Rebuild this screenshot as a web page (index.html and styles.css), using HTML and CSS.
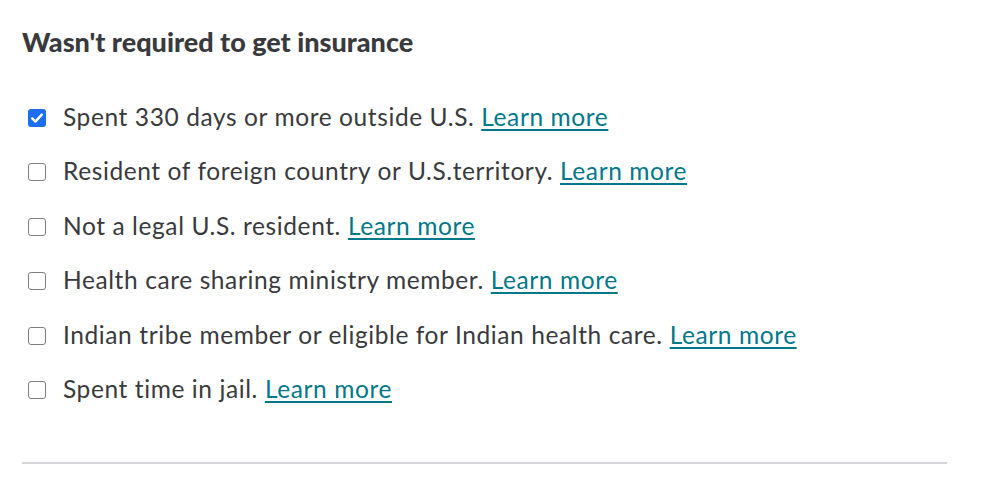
FILE: index.html
```html
<!DOCTYPE html>
<html lang="en">
  <head>
    <meta charset="UTF-8" />
    <meta name="viewport" content="width=device-width, initial-scale=1.0" />
    <title>Exemptions</title>
    <link rel="stylesheet" href="styles.css">
  </head>
  <body>
    <div class="container">
      <h2>Wasn't required to get insurance</h2>
      <ul class="options">
        <li>
          <label><input type="checkbox" checked /><span>Spent 330 days or more outside U.S. <a href="#">Learn more</a></span></label>
        </li>
        <li>
          <label><input type="checkbox" /><span>Resident of foreign country or U.S.territory. <a href="#">Learn more</a></span></label>
        </li>
        <li>
          <label><input type="checkbox" /><span>Not a legal U.S. resident. <a href="#">Learn more</a></span></label>
        </li>
        <li>
          <label><input type="checkbox" /><span>Health care sharing ministry member. <a href="#">Learn more</a></span></label>
        </li>
        <li>
          <label><input type="checkbox" /><span>Indian tribe member or eligible for Indian health care. <a href="#">Learn more</a></span></label>
        </li>
        <li>
          <label><input type="checkbox" /><span>Spent time in jail. <a href="#">Learn more</a></span></label>
        </li>
      </ul>
      <hr />
    </div>
  </body>
</html>
```

FILE: styles.css
```css
body {
  font-family: Lato, "Noto Sans", sans-serif;
  margin: 0;
  padding: 0;
  background-color: #fff;
  color: #393a3d;
}
.container {
  width: 925px;
  padding: 27px 0 0 22px;
}
h2 {
  font-size: 27px;
  font-weight: 900;
  margin: 0 0 44.5px;
  line-height: 30px;
}
.options {
  list-style: none;
  margin: 0;
  padding: 0;
}
.options li {
  height: 54.6px;
}
label {
  display: flex;
  align-items: flex-start;
  font-size: 24.5px;
  line-height: 30px;
  letter-spacing: 0.6px;
}
label a {
  color: #00788a;
  text-decoration: underline;
  text-underline-offset: 3px;
  text-decoration-thickness: 2px;
}
input[type="checkbox"] {
  appearance: none;
  width: 18px;
  height: 18px;
  margin: 7px 17px 0 6px;
  border: 1.5px solid #7c7f85;
  border-radius: 3px;
  background: #fff;
  box-sizing: border-box;
  flex-shrink: 0;
}
input[type="checkbox"]:checked {
  border: none;
  background: #1b6ff0 url("data:image/svg+xml;utf8,<svg xmlns='http://www.w3.org/2000/svg' viewBox='0 0 18 18'><path d='M4.2 9.4l3.2 3.2 6.4-7' fill='none' stroke='white' stroke-width='2.4' stroke-linecap='round' stroke-linejoin='round'/></svg>") no-repeat center;
}
hr {
  border: none;
  border-top: 2px solid #d6d7da;
  margin: 33px 0 0;
}
```
